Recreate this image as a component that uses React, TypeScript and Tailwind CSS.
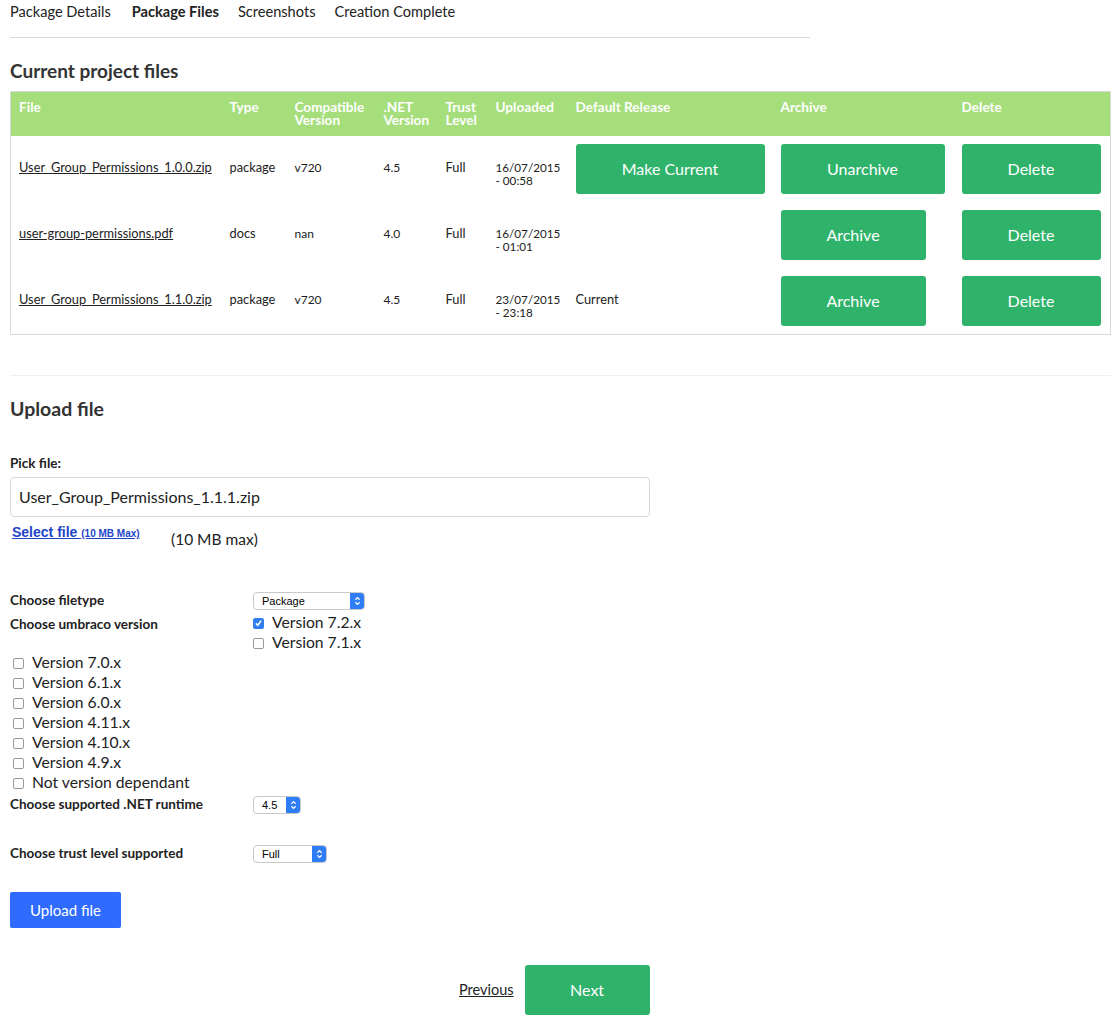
const font = "font-['Lato','Noto_Sans',sans-serif]";

const files = [
  { name: "User_Group_Permissions_1.0.0.zip", type: "package", version: "v720", net: "4.5", date: "16/07/2015", time: "- 00:58", release: "make", archive: "Unarchive" },
  { name: "user-group-permissions.pdf", type: "docs", version: "nan", net: "4.0", date: "16/07/2015", time: "- 01:01", release: "", archive: "Archive" },
  { name: "User_Group_Permissions_1.1.0.zip", type: "package", version: "v720", net: "4.5", date: "23/07/2015", time: "- 23:18", release: "Current", archive: "Archive" },
];

function GreenButton({ label, className }: { label: string; className: string }) {
  return (
    <button className={`h-[50px] rounded-[3px] bg-[#2fb36a] text-[16px] text-white ${className}`}>
      {label}
    </button>
  );
}

function Check({ label, checked }: { label: string; checked?: boolean }) {
  return (
    <label className="flex h-5 items-center text-[15.7px] text-[#222]">
      <span className={`mr-[8px] ml-[3px] flex h-[11px] w-[11px] items-center justify-center rounded-[2px] border ${checked ? "border-[#2f80ed] bg-[#2f80ed]" : "border-[#9a9a9a] bg-white"}`}>
        {checked && (
          <svg viewBox="0 0 12 12" className="h-[10px] w-[10px]" fill="none" stroke="white" strokeWidth="2">
            <path d="M2.5 6.5 5 9l4.5-6" />
          </svg>
        )}
      </span>
      {label}
    </label>
  );
}

function FakeSelect({ label, className }: { label: string; className: string }) {
  return (
    <div className={`flex h-[18px] items-stretch overflow-hidden rounded-[4px] border border-[#c9c9c9] bg-white font-['Liberation_Sans',sans-serif] text-[11px] text-black ${className}`}>
      <span className="flex-1 pl-2 leading-[17px]">{label}</span>
      <span className="flex w-[14px] items-center justify-center bg-[#2f7df6]">
        <svg viewBox="0 0 10 14" className="h-[12px] w-[9px]" fill="none" stroke="white" strokeWidth="1.4">
          <path d="M2.5 5.5 5 3l2.5 2.5M2.5 8.5 5 11l2.5-2.5" />
        </svg>
      </span>
    </div>
  );
}

export default function App() {
  return (
    <div className={`${font} h-[1025px] w-[1117px] overflow-hidden bg-white pl-[10px] text-[#222]`}>
      <nav className="flex h-[38px] w-[800px] gap-[19px] border-b border-[#d9d9d9] pt-[3px] text-[14.6px] leading-[17px]">
        <span>Package Details</span>
        <span className="ml-[2px] font-bold">Package Files</span>
        <span>Screenshots</span>
        <span>Creation Complete</span>
      </nav>

      <h2 className="mt-[21px] h-[32px] text-[19px] leading-[24px] font-bold text-[#333]">Current project files</h2>

      <table className="w-[1101px] table-fixed border border-[#d9d9d9] text-[12.8px] leading-[13px]">
        <colgroup>
          <col className="w-[211px]" />
          <col className="w-[65px]" />
          <col className="w-[89px]" />
          <col className="w-[62px]" />
          <col className="w-[50px]" />
          <col className="w-[80px]" />
          <col className="w-[205px]" />
          <col className="w-[181px]" />
          <col />
        </colgroup>
        <thead>
          <tr className="h-[44px] bg-[#a5de7b] text-left align-top text-[13.6px] text-white">
            {["File", "Type", "Compatible Version", ".NET Version", "Trust Level", "Uploaded", "Default Release", "Archive", "Delete"].map((h) => (
              <th key={h} className="pt-[9px] pr-0 pl-[8px] font-bold">{h}</th>
            ))}
          </tr>
        </thead>
        <tbody>
          {files.map((f, i) => (
            <tr key={f.name + f.date} className={i === 2 ? "h-[67px]" : "h-[66px]"}>
              <td className="pb-[2px] pl-[8px]"><a className="underline">{f.name}</a></td>
              <td className="pb-[2px] pl-[8px]">{f.type}</td>
              <td className="pb-[2px] pl-[8px] text-[12px]">{f.version}</td>
              <td className="pb-[2px] pl-[8px] text-[12px]">{f.net}</td>
              <td className="pb-[2px] pl-[8px]">Full</td>
              <td className="pl-[8px] align-middle text-[11.7px]"><div className="pt-[11px] whitespace-nowrap">{f.date}<br />{f.time}</div></td>
              <td className="pl-[8px]">
                {f.release === "make" ? <GreenButton label="Make Current" className="w-[189px]" /> : <span className="relative -top-px">{f.release}</span>}
              </td>
              <td className="pl-[8px]">
                <GreenButton label={f.archive} className={f.archive === "Unarchive" ? "w-[164px]" : "w-[145px]"} />
              </td>
              <td className="pl-[8px]"><GreenButton label="Delete" className="w-[139px]" /></td>
            </tr>
          ))}
        </tbody>
      </table>

      <hr className="mt-[40px] w-[1101px] border-[#f0f0f0]" />

      <h2 className="mt-[21px] h-[24px] text-[19.5px] leading-[24px] font-bold text-[#333]">Upload file</h2>

      <div className="mt-[34px] text-[13.5px] leading-[16px] font-bold">Pick file:</div>
      <div className="mt-[6px] flex h-[40px] w-[640px] items-center rounded-[4px] border border-[#d9d9d9] pl-[8px] text-[16px]">
        User_Group_Permissions_1.1.1.zip
      </div>

      <div className="relative h-[60px]">
        <a className="absolute top-[5px] left-[2px] font-['Liberation_Sans',sans-serif] text-[14px] font-bold text-[#1f45c8] underline">
          Select file <span className="text-[10px]">(10 MB Max)</span>
        </a>
        <span className="absolute top-[11px] left-[161px] text-[15.5px]">(10 MB max)</span>
      </div>

      <div className="mt-[15px] flex h-[18px] items-center">
        <span className="w-[243px] pb-[2px] text-[13.5px] font-bold">Choose filetype</span>
        <FakeSelect label="Package" className="w-[112px]" />
      </div>
      <div className="flex">
        <span className="mt-[6px] w-[240px] text-[13.5px] leading-[16px] font-bold">Choose umbraco version</span>
        <div className="mt-[3px]">
          <Check label="Version 7.2.x" checked />
          <Check label="Version 7.1.x" />
        </div>
      </div>
      <div>
        {["Version 7.0.x", "Version 6.1.x", "Version 6.0.x", "Version 4.11.x", "Version 4.10.x", "Version 4.9.x", "Not version dependant"].map((v) => (
          <Check key={v} label={v} />
        ))}
      </div>

      <div className="mt-[3px] flex h-[18px] items-center">
        <span className="w-[243px] pb-[2px] text-[13.5px] font-bold">Choose supported .NET runtime</span>
        <FakeSelect label="4.5" className="w-[48px]" />
      </div>
      <div className="mt-[31px] flex h-[18px] items-center">
        <span className="w-[243px] pb-[2px] text-[13.5px] font-bold">Choose trust level supported</span>
        <FakeSelect label="Full" className="w-[74px]" />
      </div>

      <button className="mt-[29px] h-[36px] w-[111px] rounded-[2px] bg-[#2f6bff] text-[15px] text-white">Upload file</button>

      <div className="mt-[37px] ml-[449px] flex items-center gap-[11px]">
        <a className="text-[14.5px] underline">Previous</a>
        <GreenButton label="Next" className="w-[125px]" />
      </div>
    </div>
  );
}
